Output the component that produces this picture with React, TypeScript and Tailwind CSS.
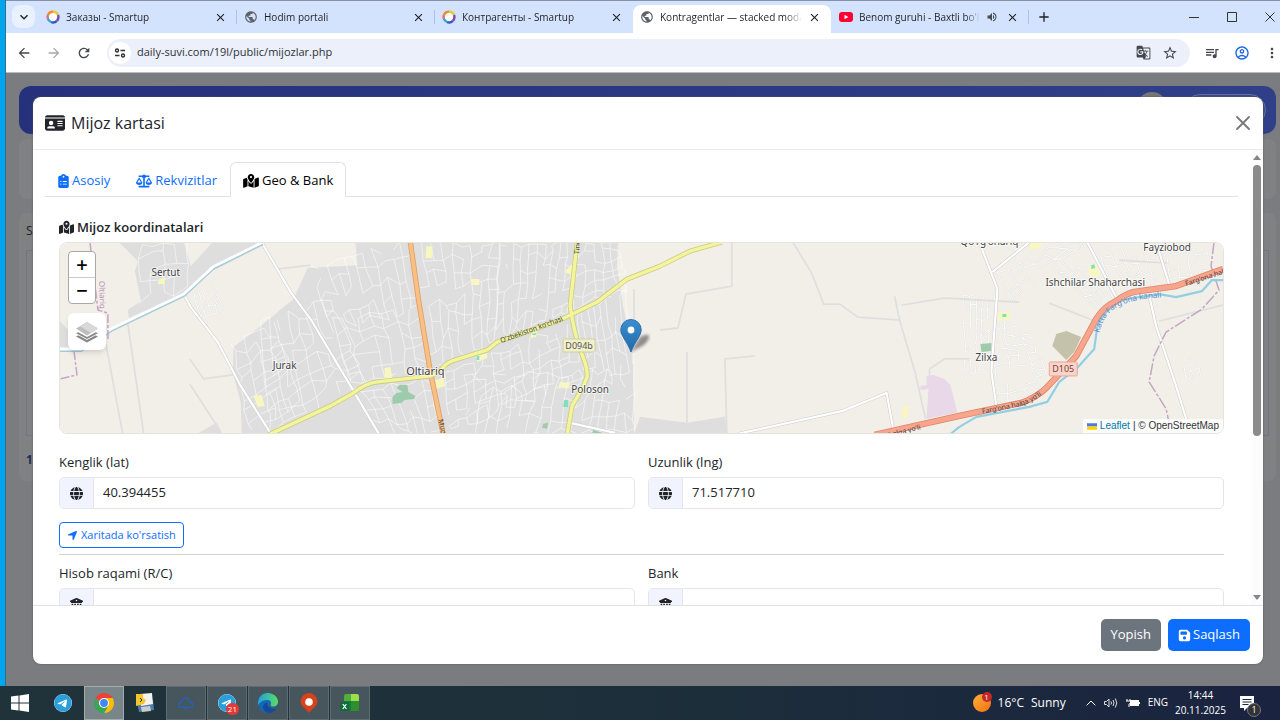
import type { ReactNode } from 'react';
import clsx from 'clsx';
import {
  FaBuildingColumns,
  FaClipboardList,
  FaFloppyDisk,
  FaGlobe,
  FaIdCard,
  FaLocationArrow,
  FaMapLocationDot,
  FaScaleBalanced,
  FaTelegram,
} from 'react-icons/fa6';
import {
  MdAdd,
  MdArrowBack,
  MdArrowForward,
  MdClose,
  MdGTranslate,
  MdKeyboardArrowDown,
  MdMoreVert,
  MdOutlineAccountCircle,
  MdPublic,
  MdQueueMusic,
  MdRefresh,
  MdStarBorder,
  MdVolumeUp,
} from 'react-icons/md';

type Point = [number, number];

/* ---------- browser chrome ---------- */

const SmartupIcon = () => (
  <svg viewBox="0 0 14 14" className="h-[14px] w-[14px] shrink-0" fill="none" strokeWidth="2.4">
    <circle cx="7" cy="7" r="5.4" fill="#fff" />
    <path d="M2 5A5.4 5.4 0 0 1 7 1.6" stroke="#f08a24" />
    <path d="M7 1.6A5.4 5.4 0 0 1 12 5" stroke="#e9c832" />
    <path d="M12 5a5.4 5.4 0 0 1-1.2 5.8" stroke="#7a4bb5" />
    <path d="M10.8 10.8A5.4 5.4 0 0 1 5 12" stroke="#3157c9" />
    <path d="M5 12a5.4 5.4 0 0 1-3.2-3.6" stroke="#35a6c4" />
    <path d="M1.8 8.4A5.4 5.4 0 0 1 2 5" stroke="#f0637a" />
  </svg>
);

const YoutubeIcon = () => (
  <svg viewBox="0 0 14 10" className="h-[10px] w-[14px] shrink-0">
    <rect width="14" height="10" rx="3" fill="#ff0033" />
    <path d="M5.5 2.8v4.4L9.3 5z" fill="#fff" />
  </svg>
);

const GlobeIcon = () => <MdPublic className="h-[14px] w-[14px] shrink-0 text-[#5f6368]" />;

const browserTabs = [
  { title: 'Заказы - Smartup', icon: <SmartupIcon /> },
  { title: 'Hodim portali', icon: <GlobeIcon /> },
  { title: 'Контрагенты - Smartup', icon: <SmartupIcon /> },
  { title: 'Kontragentlar — stacked modal', icon: <GlobeIcon />, active: true },
  { title: "Benom guruhi - Baxtli bo'l |", icon: <YoutubeIcon />, audio: true },
];

const TabStrip = () => (
  <div className="flex h-[33px] shrink-0 border-t border-[#8792a8] bg-[#d3e2fd] pl-[6px] text-[#1f2024]">
    <button
      aria-label="Search tabs"
      className="mt-1 mr-[4px] flex h-[23px] w-[23px] items-center justify-center rounded-lg bg-[#e9f0fe]"
    >
      <MdKeyboardArrowDown className="h-4 w-4" />
    </button>
    {browserTabs.map((tab, i) => (
      <div
        key={tab.title}
        className={clsx(
          'relative flex w-[198px] min-w-0 items-center gap-[6px] pr-[10px] text-[10px]',
          tab.active ? 'mt-1 rounded-t-lg bg-white pb-1 pl-[7px]' : 'pl-[7px]',
          tab.audio && 'pl-[8px]',
        )}
      >
        {tab.icon}
        <span className="min-w-0 flex-1 overflow-hidden whitespace-nowrap [mask-image:linear-gradient(to_right,black_88%,transparent)]">
          {tab.title}
        </span>
        {tab.audio && <MdVolumeUp className="mr-[2px] h-3 w-3 shrink-0 text-[#474a50]" />}
        <button aria-label={`Close ${tab.title}`} className="shrink-0">
          <MdClose className="h-[13px] w-[13px]" />
        </button>
        {i !== 2 && i !== 3 && <i className="absolute right-0 h-[14px] w-px bg-[#a5c3f9]" />}
      </div>
    ))}
    <button aria-label="New tab" className="ml-[7px]">
      <MdAdd className="h-4 w-4" />
    </button>
    <div className="ml-auto flex items-center gap-7 pr-[5px]">
      <button aria-label="Minimize">
        <svg viewBox="0 0 10 10" className="h-[10px] w-[10px]" stroke="#333">
          <path d="M0 5.5h10" />
        </svg>
      </button>
      <button aria-label="Maximize">
        <svg viewBox="0 0 10 10" className="h-[10px] w-[10px]" stroke="#333" fill="none">
          <path d="M.5.5h9v9h-9z" />
        </svg>
      </button>
      <button aria-label="Close window">
        <svg viewBox="0 0 10 10" className="h-[10px] w-[10px]" stroke="#333">
          <path d="M.5.5l9 9M9.5.5l-9 9" />
        </svg>
      </button>
    </div>
  </div>
);

const Toolbar = () => (
  <div className="flex h-[40px] shrink-0 items-center border-b border-[#b9bbbf] bg-white pl-[10px] text-[#44474d]">
    <div className="flex gap-[14px]">
      <button aria-label="Back">
        <MdArrowBack className="h-4 w-4" />
      </button>
      <button aria-label="Forward" className="text-[#a5a7ab]">
        <MdArrowForward className="h-4 w-4" />
      </button>
      <button aria-label="Reload">
        <MdRefresh className="h-4 w-4" />
      </button>
    </div>
    <div className="ml-[15px] flex h-7 flex-1 items-center rounded-full bg-[#ebf0fa] pr-3 pl-[2px]">
      <button
        aria-label="View site information"
        className="flex h-[22px] w-[22px] items-center justify-center rounded-full bg-white"
      >
        <svg viewBox="0 0 12 12" className="h-3 w-3" fill="none" stroke="#333" strokeWidth="1.4">
          <circle cx="3" cy="3.5" r="1.5" />
          <path d="M6.5 3.5H11M1 8.5h4.5" />
          <circle cx="9" cy="8.5" r="1.5" />
        </svg>
      </button>
      <input
        aria-label="Address"
        defaultValue="daily-suvi.com/19l/public/mijozlar.php"
        className="ml-[6px] min-w-0 flex-1 bg-transparent text-[11px] text-[#2d3036] outline-none"
      />
      <button aria-label="Translate" className="mr-[11px]">
        <MdGTranslate className="h-[15px] w-[15px]" />
      </button>
      <button aria-label="Bookmark">
        <MdStarBorder className="h-4 w-4" />
      </button>
    </div>
    <div className="ml-[14px] flex items-center gap-[14px]">
      <button aria-label="Media controls">
        <MdQueueMusic className="h-4 w-4" />
      </button>
      <button aria-label="Profile" className="text-[#1b66e8]">
        <MdOutlineAccountCircle className="h-4 w-4" />
      </button>
      <button aria-label="Menu">
        <MdMoreVert className="h-4 w-4" />
      </button>
    </div>
  </div>
);

/* ---------- map ---------- */

// Repeatable pseudo random number in [0, 1)
const noise = (n: number) => {
  const s = Math.sin(n * 127.1 + 11.7) * 43758.5453;
  return s - Math.floor(s);
};

// Street grid inside a quad given clockwise from its top left corner
const streets = (quad: Point[], cols: number, rows: number, seed: number) => {
  const [a, b, c, d] = quad;
  const at = (i: number, j: number) => {
    const k = seed + i * 31 + j * 7;
    const u = (i + (noise(k) - 0.5) * 0.4) / cols;
    const v = (j + (noise(k + 0.5) - 0.5) * 0.7) / rows;
    const mix = (n: 0 | 1) =>
      (a[n] * (1 - u) + b[n] * u) * (1 - v) + (d[n] * (1 - u) + c[n] * u) * v;
    return `${mix(0).toFixed(1)} ${mix(1).toFixed(1)}`;
  };
  let path = '';
  for (let i = 0; i <= cols; i++) {
    for (let j = 0; j <= rows; j++) {
      const k = seed * 3 + i * 17 + j * 5;
      if (j < rows && noise(k) > 0.2) path += `M${at(i, j)}L${at(i, j + 1)}`;
      if (i < cols && noise(k + 0.3) > 0.3) path += `M${at(i, j)}L${at(i + 1, j)}`;
    }
  }
  return path;
};

const townStreets = [
  streets([[307, 268], [410, 243], [420, 310], [330, 330]], 11, 4, 1),
  streets([[260, 325], [330, 300], [365, 385], [270, 434]], 8, 8, 2),
  streets([[232, 345], [275, 325], [300, 400], [250, 434]], 4, 8, 3),
  streets([[330, 320], [420, 308], [430, 372], [352, 385]], 7, 5, 4),
  streets([[412, 243], [500, 243], [495, 340], [430, 372]], 9, 8, 5),
  streets([[500, 243], [575, 243], [568, 312], [495, 342]], 10, 6, 6),
  streets([[578, 243], [618, 243], [628, 290], [572, 310]], 5, 6, 7),
  streets([[575, 315], [625, 295], [634, 370], [584, 372]], 8, 4, 8),
  streets([[445, 372], [575, 325], [582, 380], [450, 434]], 14, 6, 9),
  streets([[470, 380], [583, 372], [568, 434], [465, 434]], 10, 4, 10),
  streets([[585, 375], [634, 365], [634, 434], [570, 434]], 7, 4, 11),
  streets([[352, 392], [430, 380], [440, 434], [378, 434]], 8, 4, 12),
  streets([[140, 243], [188, 243], [186, 290], [138, 300]], 4, 4, 13),
].join('');

const villageStreets = [
  streets([[964, 296], [996, 292], [992, 372], [966, 376]], 5, 6, 21),
  streets([[998, 320], [1026, 330], [1056, 392], [996, 404]], 4, 11, 22),
  streets([[1000, 275], [1060, 243], [1085, 243], [1012, 300]], 6, 3, 23),
  streets([[1050, 262], [1088, 250], [1115, 300], [1100, 312]], 4, 3, 24),
  streets([[1095, 243], [1155, 243], [1168, 282], [1116, 292]], 5, 4, 25),
  streets([[1165, 243], [1205, 243], [1210, 270], [1172, 280]], 4, 3, 26),
  streets([[1183, 362], [1194, 358], [1202, 376], [1188, 384]], 2, 3, 27),
  streets([[193, 295], [210, 283], [222, 310], [200, 322]], 4, 4, 28),
].join('');

const yellowRoads =
  'M268 436L330 407 353 394Q366 384 377 383L430 377Q440 373 444 367 448 363 455 361L487 351 497 343 560 321 597 303 627 280 660 267 690 252 722 243M577 243L570 307Q574 335 581 353 588 370 587 378L583 388 572 407 567 436';
const redRoad =
  'M875 436L960 417 1022 404Q1038 398 1048 388L1077 357 1097 320Q1104 308 1117 302 1128 293 1140 292L1177 287 1224 270';
const whiteRoads =
  'M183 295L190 308 217 343 240 387 271 436M261 243L290 293 310 320 350 387 379 436M738 435L843 412 887 394 894 432M980 243L998 290 992 373 997 407M993 273L1030 243M1088 243L1118 300M1157 243L1170 285M1150 296L1157 327 1177 387 1192 436M570 424L615 434';
const river =
  'M950 436L960 428 977 418 1030 408 1048 403 1060 383 1077 370 1095 350 1098 328Q1106 308 1127 300L1160 295 1177 298 1203 292 1213 281H1224';

const MapPicture = () => (
  <svg
    viewBox="59 243 1165 192"
    preserveAspectRatio="xMidYMid slice"
    className="h-full w-full"
    fill="none"
    fontFamily="Noto Sans, sans-serif"
    strokeLinejoin="round"
  >
    <path fill="#f2efe9" d="M59 243h1165v192H59z" />
    <g fill="#dedede">
      <path d="M355 243L357 266 307 269 293 300 260 327 233 348 232 374 240 403 241 436H634L633 353 623 307 617 267 618 243z" />
      <path d="M118 243L137 262 134 272 140 302 127 311 128 319 183 295 212 268 262 245V243H212L190 267 183 243z" />
      <path d="M59 322L67 331 70 348 59 351zM198 434L216 424 222 436z" />
      <path d="M634 436L640 418 687 424 725 418 728 436z" />
    </g>
    <path d={townStreets} stroke="#fff" strokeWidth="0.9" opacity="0.6" />
    <path d={villageStreets} stroke="#d6d5d5" strokeWidth="1.8" opacity="0.5" />
    <path d={villageStreets} stroke="#fafafa" strokeWidth="1" />

    <path
      fill="#f8f7bf"
      d="M158 281l6-3v7h-7zM253 397l8-1 3 11-7 1zM426 247h6v12h-7zM471 280h8v6h-8zM564 273l8-8v11zM384 369l6-1 2 11-7 1zM435 381l8-2 2 8-9 3zM560 383l10 1-2 5-10-1zM477 357l10-3v5l-10 4zM531 334l6-3-1 7-6 1zM1030 244l13-1-3 6-9 1zM1089 268l8-3 4 12-10 1zM998 314l14-1-2 7-10 2zM903 408l6-1-1 11-6 2z"
    />
    <path
      fill="#9fcbad"
      d="M392 398l4-4 6-1-6-4 3-3h8l1 7 7 4-1 3-10 1-3 3-9 1zM543 425l5-1-1 6-5-1zM593 431l12 4h-13zM981 345l11-1v8l-10 1z"
    />
    <path
      fill="#7fe0bb"
      d="M564 401h4v7h-5zM477 357h2v4h-3zM1092 266l3-1 1 4-4 1zM1003 315h4v3h-4zM532 335l4-1v2h-4z"
    />
    <path fill="#c5c2ab" d="M1057 335L1067 332 1082 338 1075 353 1067 361 1053 347z" />
    <path fill="#e9d8e8" d="M927 377l7-1 11 4 6 6 7 28-31 6 2-30-8 1v-4l6-1z" />

    <path
      stroke="#e0dfe0"
      strokeWidth="1.8"
      d="M660 331L678 329 686 295 732 287V243M793 243L812 274 824 305H840L858 318 900 321 916 375 926 420M895 297L900 321M902 306L945 299 970 300M687 353V424M727 436L725 360 755 357M930 378V370L945 360H970M105 345L122 436M127 325L143 436M189 360L203 380 232 376M189 385L220 433M1120 261L1168 264M634 290V320M210 335L205 325M276 270L310 266M1050 304L1098 323M1160 322L1224 306M960 300L1020 303"
    />
    <path stroke="#cbcbcb" strokeWidth="3.2" d={whiteRoads} />
    <path stroke="#fff" strokeWidth="2.2" d={whiteRoads} />
    <path stroke="#a5cbd8" strokeWidth="4" d="M59 351H80L110 331 183 296 212 269 262 244" />
    <path stroke="#fff" strokeWidth="2.8" d="M59 350H80L110 330 183 295 212 268 262 243" />

    <path
      stroke="#c9a3c9"
      strokeWidth="1.5"
      strokeDasharray="9 2 3 2"
      d="M89 243L97 311 107 314V342M73 352L76 376 59 380"
    />
    <path
      stroke="#c2a6c2"
      strokeWidth="1.5"
      strokeDasharray="12 2 3 2"
      d="M1215 243L1212 267 1220 291 1203 310 1167 333 1155 357 1150 383 1167 410 1170 424"
    />

    <path stroke="#93cfe2" strokeWidth="2.2" d={river} />
    <path stroke="#e2a069" strokeWidth="5.4" d="M410 243L418 300 430 373 443 436" />
    <path stroke="#f8c183" strokeWidth="3.6" d="M410 243L418 300 430 373 443 436" />
    <path stroke="#c9cb84" strokeWidth="5" d={yellowRoads} />
    <path stroke="#f3f49c" strokeWidth="3.4" d={yellowRoads} />
    <path stroke="#e08468" strokeWidth="6.4" d={redRoad} />
    <path stroke="#f7a58d" strokeWidth="4.8" d={redRoad} />

    <path id="uzbekiston" d="M501 344L562 322 590 308" />
    <path id="halqa" d="M983 415L1022 407Q1036 402 1050 390" />
    <path id="halqa-east" d="M1187 287L1230 273" />
    <path id="halqa-west" d="M884 440L935 427" />
    <path id="kanal" d="M1100 334Q1104 316 1118 308 1134 299 1170 298" />
    <g fill="#444" fontSize="7">
      <text>
        <textPath href="#uzbekiston">O'zbekiston ko'chasi</textPath>
      </text>
      <text>
        <textPath href="#halqa">Farg'ona halqa yo'li</textPath>
      </text>
      <text>
        <textPath href="#halqa-east">Farg'ona hal</textPath>
      </text>
      <text>
        <textPath href="#halqa-west">a halqa yo'li</textPath>
      </text>
      <text transform="translate(579 255) rotate(-86)">Tinc</text>
      <text transform="translate(438 421) rotate(78)">Muqi</text>
      <text fill="#5b8fd0" fontSize="8">
        <textPath href="#kanal">Katta Farg'ona kanali</textPath>
      </text>
      <text fill="#b78fb9" fontSize="8" transform="translate(98 282) rotate(88)">
        Oltiariq
      </text>
    </g>

    <g fill="#444" fontSize="10" textAnchor="middle" stroke="#fff" strokeWidth="2" paintOrder="stroke" strokeOpacity="0.6">
      <text x="165" y="277">Sertut</text>
      <text x="284" y="370">Jurak</text>
      <text x="425" y="376" fontSize="11">Oltiariq</text>
      <text x="590" y="394">Poloson</text>
      <text x="990" y="246">Qo'rg'onariq</text>
      <text x="1168" y="252">Fayziobod</text>
      <text x="1096" y="287">Ishchilar Shaharchasi</text>
      <text x="987" y="362">Zilxa</text>
    </g>

    <rect x="563" y="340" width="32" height="13" rx="1" fill="#f1f0cd" stroke="#cfcf9a" />
    <text x="579" y="350" fill="#555" fontSize="9" textAnchor="middle">
      D094b
    </text>
    <rect x="1050" y="363" width="28" height="14" rx="1" fill="#f8d5cb" stroke="#eaa593" />
    <text x="1064" y="373" fill="#7c3f32" fontSize="9" textAnchor="middle">
      D105
    </text>
  </svg>
);

const MapPin = () => (
  <svg viewBox="0 0 40 34" className="h-[34px] w-[40px]">
    <defs>
      <linearGradient id="pin" x1="0" x2="0" y1="0" y2="1">
        <stop offset="0" stopColor="#3a8fd2" />
        <stop offset="1" stopColor="#2268a8" />
      </linearGradient>
      <filter id="soft">
        <feGaussianBlur stdDeviation="1.5" />
      </filter>
    </defs>
    <path d="M11 33L20 18q8-4 9-1t-5 9z" fill="#000" opacity="0.4" filter="url(#soft)" />
    <path
      d="M11 .5A10.2 10.2 0 0 0 .8 10.7C.8 17 7 22 11 33 15 22 21.2 17 21.2 10.7A10.2 10.2 0 0 0 11 .5z"
      fill="url(#pin)"
      stroke="#2b70ab"
    />
    <circle cx="11" cy="11" r="3.4" fill="#fff" />
  </svg>
);

const GeoMap = () => (
  <div className="relative h-[192px] overflow-hidden rounded-lg border border-[#e6e4de]">
    <MapPicture />
    <div className="absolute top-[76px] left-1/2 -ml-[22px]">
      <MapPin />
    </div>
    <div className="absolute top-[8px] left-[8px] flex w-[28px] flex-col rounded border border-[#a9a8a5] bg-white text-xl text-black">
      <button className="h-[26px] border-b border-[#ccc] leading-6 font-semibold">+</button>
      <button className="h-[25px] leading-5 font-semibold">−</button>
    </div>
    <button
      aria-label="Layers"
      className="absolute top-[70px] left-[8px] flex h-[37px] w-[38px] items-center justify-center rounded-md bg-white shadow-md"
    >
      <svg viewBox="0 0 24 24" className="h-6 w-6">
        <path d="M12 11L1 16.5 12 22.5 23 16.5z" fill="#888" />
        <path d="M12 9L1 14 12 20 23 14z" fill="#fff" />
        <path d="M12 8L1 13.2 12 19 23 13.2z" fill="#8a8a8a" />
        <path d="M12 6L1 11 12 17 23 11z" fill="#fff" />
        <path d="M12 2L1 8.5 12 15.5 23 8.5z" fill="#bdbdbd" />
        <path d="M12 2L5 6.2 16 13 23 8.5z" fill="#d8d8d8" />
      </svg>
    </button>
    <div className="absolute right-0 bottom-0 flex items-center gap-[3px] bg-white/80 px-1 font-['Liberation_Sans',sans-serif] text-[10px] leading-[14px] text-[#333]">
      <svg viewBox="0 0 12 8" className="h-[7px] w-[10px]">
        <path fill="#4c7be1" d="M0 0h12v4H0z" />
        <path fill="#ffd500" d="M0 4h12v4H0z" />
      </svg>
      <a href="https://leafletjs.com" className="text-[#0078a8]">
        Leaflet
      </a>
      <span>| © OpenStreetMap</span>
    </div>
  </div>
);

/* ---------- client card dialog ---------- */

const cardTabs = [
  { label: 'Asosiy', Icon: FaClipboardList },
  { label: 'Rekvizitlar', Icon: FaScaleBalanced },
  { label: 'Geo & Bank', Icon: FaMapLocationDot, active: true },
];

interface FieldProps {
  id: string;
  label: string;
  icon: ReactNode;
  value?: string;
}

const Field = ({ id, label, icon, value = '' }: FieldProps) => (
  <div>
    <label htmlFor={id} className="mb-[5px] block leading-5">
      {label}
    </label>
    <div className="flex h-8 overflow-hidden rounded-[5px] border border-[#e4e6ea]">
      <span className="flex w-[34px] items-center justify-center border-r border-[#e4e6ea] bg-[#f1f4fe]">
        {icon}
      </span>
      <input id={id} defaultValue={value} className="min-w-0 flex-1 px-[9px] outline-none" />
    </div>
  </div>
);

const ClientDialog = () => (
  <div
    role="dialog"
    aria-labelledby="dialog-title"
    className="flex min-h-0 flex-1 flex-col overflow-hidden rounded-lg bg-white text-[13px] text-[#212529] shadow-[0_0_2px_#555]"
  >
    <header className="flex h-[53px] shrink-0 items-center border-b border-[#e9ebee] px-3">
      <FaIdCard className="mr-[6px] h-5 w-5" />
      <h5 id="dialog-title" className="text-base font-medium">
        Mijoz kartasi
      </h5>
      <button aria-label="Close" className="ml-auto">
        <svg viewBox="0 0 16 16" className="h-4 w-4" stroke="#777" strokeWidth="1.8" strokeLinecap="round">
          <path d="M2 2l12 12M14 2L2 14" />
        </svg>
      </button>
    </header>

    <div className="flex min-h-0 flex-1">
      <div className="min-w-0 flex-1 overflow-y-auto pt-3 pr-[13px] pl-3 [scrollbar-width:none]">
        <div role="tablist" className="flex border-b border-[#dee2e6]">
          {cardTabs.map(({ label, Icon, active }) => (
            <button
              key={label}
              role="tab"
              aria-selected={!!active}
              className={clsx(
                '-mb-px flex h-[35px] items-center gap-[3px] rounded-t-md border px-3 pt-[2px]',
                active ? 'border-[#dee2e6] border-b-white bg-white text-black' : 'border-transparent text-[#0d6efd]',
              )}
            >
              <Icon className={clsx('h-[14px]', label === 'Asosiy' ? 'w-[11px]' : 'w-4')} />
              {label}
            </button>
          ))}
        </div>

        <div className="px-[14px] pt-5">
          <h6 className="mb-[5px] flex items-center gap-[3px] leading-5 font-semibold">
            <FaMapLocationDot className="h-[15px] w-[15px]" />
            Mijoz koordinatalari
          </h6>
          <GeoMap />
          <div className="mt-[18px] grid grid-cols-2 gap-x-[13px]">
            <Field id="lat" label="Kenglik (lat)" icon={<FaGlobe />} value="40.394455" />
            <Field id="lng" label="Uzunlik (lng)" icon={<FaGlobe />} value="71.517710" />
          </div>
          <button className="mt-[13px] flex h-[26px] items-center gap-[3px] rounded border border-[#0d6efd] px-[7px] text-[11px] text-[#0d6efd]">
            <FaLocationArrow className="h-[11px] w-[11px]" />
            Xaritada ko'rsatish
          </button>
          <hr className="my-[6px] border-[#d0d2d4]" />
          <div className="grid grid-cols-2 gap-x-[13px] pt-[2px] pb-3">
            <Field id="account" label="Hisob raqami (R/C)" icon={<FaBuildingColumns />} />
            <Field id="bank" label="Bank" icon={<FaBuildingColumns />} />
          </div>
        </div>
      </div>
      <div className="flex w-3 shrink-0 flex-col items-center bg-[#fcfcfc] pt-[5px] pb-[5px]">
        <i className="border-x-4 border-b-5 border-x-transparent border-b-[#858585]" />
        <i className="mt-[5px] h-[61%] w-2 rounded-full bg-[#8b8b8b]" />
        <i className="mt-auto border-x-4 border-t-5 border-x-transparent border-t-[#858585]" />
      </div>
    </div>

    <footer className="flex h-[59px] shrink-0 items-center justify-end gap-[7px] border-t border-[#dee2e6] px-[13px] text-white">
      <button className="h-8 rounded-[5px] bg-[#6c757d] px-[10px]">Yopish</button>
      <button className="flex h-8 items-center gap-[2px] rounded-[5px] bg-[#0d6efd] px-[10px]">
        <FaFloppyDisk />
        Saqlash
      </button>
    </footer>
  </div>
);

const Page = () => (
  <main className="relative flex min-h-0 flex-1 flex-col bg-[#7b7c80]">
    <div className="flex flex-col pt-[13px] pr-1 pl-[13px] text-[#222]">
      <nav className="flex h-[48px] justify-end gap-4 rounded-xl bg-linear-to-r from-[#25327b] to-[#2f3f88] px-[10px]">
        <i className="mt-[6px] h-8 w-8 rounded-full bg-[#77777a]" />
        <i className="mt-2 h-8 w-[82px] rounded-full border border-[#66709d] bg-[#3a4789]" />
      </nav>
      <div className="mt-[5px] h-[60px] rounded-lg bg-[#808183]" />
      <div className="mt-[14px] h-[268px] rounded-lg bg-[#808183] px-[7px] pt-[10px]">
        <span className="block text-xs">S</span>
        <div className="mt-[11px] h-[186px] border border-[#73748a]" />
        <span className="mt-4 block text-xs font-bold text-[#232b52]">1</span>
      </div>
    </div>
    <div className="absolute inset-0 flex pt-6 pr-[17px] pb-[22px] pl-[27px]">
      <ClientDialog />
    </div>
  </main>
);

/* ---------- taskbar ---------- */

const TelegramIcon = () => (
  <span className="block rounded-full bg-white">
    <FaTelegram className="h-[18px] w-[18px] text-[#2a9fdb]" />
  </span>
);

const apps: { name: string; state?: 'open' | 'front'; icon: ReactNode }[] = [
  { name: 'Telegram', icon: <TelegramIcon /> },
  {
    name: 'Chrome',
    state: 'front',
    icon: (
      <svg viewBox="0 0 20 20" className="h-5 w-5">
        <path d="M10 10L1.34 5A10 10 0 0 1 18.66 5z" fill="#ea4335" />
        <path d="M10 5h8.66A10 10 0 0 1 10 20l4.3-7.500z" fill="#fbbc04" />
        <path d="M1.34 5L5.7 12.500 14.300 12.500 10 20A10 10 0 0 1 1.34 5z" fill="#34a853" />
        <circle cx="10" cy="10" r="5" fill="#fff" />
        <circle cx="10" cy="10" r="3.9" fill="#4285f4" />
      </svg>
    ),
  },
  {
    name: 'Save manager',
    icon: (
      <svg viewBox="0 0 20 20" className="h-5 w-5">
        <path d="M2 9l16-2 1 10-15 2z" fill="#4f7fae" />
        <path d="M5 1l12-1 1 11-12 2z" fill="#f2f2ee" />
        <path d="M6 14l9-1 1 5-9 1z" fill="#ccc" />
        <path d="M1 1h7v4l3 2-2 4-8 2z" fill="#f5c52d" />
        <path d="M5 5l2 2-2 2" stroke="#333" fill="none" />
      </svg>
    ),
  },
  {
    name: 'Cloud',
    state: 'open',
    icon: (
      <svg viewBox="0 0 18 16" className="h-4 w-[18px]" fill="none" stroke="#2461b8" strokeWidth="1.4">
        <path d="M5 12.5C0 12.5 1 7 4.5 7.2 5 2 12 2 12.7 7 17 6.5 17 12.5 13 12.5z" />
        <path d="M7 14h4" strokeDasharray="1 1" />
      </svg>
    ),
  },
  {
    name: 'Telegram chat',
    state: 'open',
    icon: (
      <>
        <TelegramIcon />
        <span className="absolute right-[7px] bottom-[4px] rounded-full bg-[#e53935] px-[2px] text-[8px] leading-3 text-white">
          21
        </span>
      </>
    ),
  },
  {
    name: 'Edge',
    state: 'open',
    icon: (
      <svg viewBox="0 0 20 20" className="h-5 w-5">
        <defs>
          <linearGradient id="edge" x1="0" x2="1" y1="0.3" y2="0.4">
            <stop offset="0" stopColor="#1f9fe0" />
            <stop offset="1" stopColor="#5bdc62" />
          </linearGradient>
        </defs>
        <circle cx="10" cy="10" r="10" fill="#1467b8" />
        <path d="M0 9C1 3 5 0 10 0s10 4 10 8.5S16 14 14 13.5s-1-2-1-3.5-1-3-4-3-6 1-9 5z" fill="url(#edge)" />
        <path d="M20 13c-3 3-11 2-11-3 0-1-4 0-4 4 0 3 3 5.5 6 6 4 0 8-3.5 9-7z" fill="#0f4c9c" />
        <path d="M20 12.5c-3 2.5-9 2-11-2 .5 4 5 6 9.5 5z" fill="#4b5a61" />
      </svg>
    ),
  },
  {
    name: 'Maps',
    state: 'open',
    icon: (
      <svg viewBox="0 0 18 20" className="h-5 w-[18px]">
        <path d="M9 0a8.5 8.5 0 0 0-8.5 8.5C.5 13 5 15 9 20c4-5 8.5-7 8.5-11.5A8.5 8.5 0 0 0 9 0z" fill="#d5421b" />
        <circle cx="9" cy="9" r="3.8" fill="#fff" />
      </svg>
    ),
  },
  {
    name: 'Excel',
    state: 'open',
    icon: (
      <svg viewBox="0 0 20 20" className="h-5 w-5">
        <path d="M4 3q0-2 2-2h5v9H4z" fill="#4fae3c" />
        <path d="M11 1h6q2 0 2 2v6h-8z" fill="#9be04b" />
        <path d="M4 8h7v10H4z" fill="#157a3b" />
        <path d="M11 8h8v9q0 1-2 1h-6z" fill="#2f8f2f" />
        <rect y="9" width="9" height="9" rx="2" fill="#0f6b3b" />
        <path d="M2.8 11l3.6 5M6.4 11l-3.6 5" stroke="#fff" strokeWidth="1.2" />
      </svg>
    ),
  },
];

const Taskbar = () => (
  <footer className="flex h-[34px] shrink-0 items-center bg-linear-to-r from-[#20333a] via-[#1d2f3a] to-[#1a2340] text-xs text-white">
    <button aria-label="Start" className="flex w-[42px] justify-center pr-[3px]">
      <svg viewBox="0 0 18 18" className="h-[18px] w-[18px]" fill="#fff">
        <path d="M0 2.5L7.5 1.5V8.5H0zM8.5 1.4L18 0V8.5H8.5zM0 9.5H7.5V16.5L0 15.5zM8.5 9.5H18V18L8.5 16.6z" />
      </svg>
    </button>
    <div className="flex h-full gap-px pl-px">
      {apps.map(({ name, state, icon }) => (
        <button
          key={name}
          aria-label={name}
          className={clsx(
            'relative flex w-10 items-center justify-center',
            state === 'front' && 'border border-[#a3abad] bg-[#78868a]',
            state === 'open' && 'border border-[#5d6b72] bg-[#47555d]',
          )}
        >
          {icon}
        </button>
      ))}
    </div>
    <div className="ml-auto flex items-center">
      <div className="flex items-center">
        <span className="relative mr-[7px] h-[18px] w-[18px] rounded-full bg-linear-to-br from-[#fbb034] to-[#f26f13]">
          <b className="absolute -top-[2px] -right-[1px] h-[10px] w-[10px] rounded-full bg-[#c62828] text-center text-[8px] leading-[10px] font-normal">
            1
          </b>
        </span>
        <span className="mr-[7px]">16°C</span>
        <span>Sunny</span>
      </div>
      <div className="ml-5 flex items-center gap-2">
        <svg viewBox="0 0 10 6" className="h-[6px] w-[10px]" fill="none" stroke="#fff">
          <path d="M.7 5.3L5 1l4.3 4.3" />
        </svg>
        <svg viewBox="0 0 14 12" className="h-3 w-[14px]" fill="none" stroke="#ddd">
          <path d="M.5 4.5h2L5 2v8L2.5 7.5h-2zM7 4.5q1 1.5 0 3M9 3q2 3 0 6M11.3 1.5q3 4.5 0 9" />
        </svg>
        <svg viewBox="0 0 14 10" className="h-[10px] w-[14px]" fill="#fff">
          <path d="M4 2h9v6H4zM13 4h1v2h-1z" />
          <path d="M1 1v2M4 1v2M0 3h5v2L3 6v3" fill="none" stroke="#fff" />
        </svg>
        <span className="text-[10px]">ENG</span>
      </div>
      <div className="ml-[7px] text-center text-[10px] leading-[15px]">
        <div>14:44</div>
        <div>20.11.2025</div>
      </div>
      <button aria-label="Notifications" className="relative mr-[26px] ml-[14px]">
        <svg viewBox="0 0 14 15" className="h-[15px] w-[14px]">
          <path d="M0 0h14v12H7l-3 3v-3H0z" fill="#fff" />
          <path d="M2.5 3.5h9M2.5 6h9M2.5 8.5h6" stroke="#1a2440" />
        </svg>
        <span className="absolute -right-[7px] -bottom-[6px] h-[14px] w-[14px] rounded-full border border-[#777] bg-[#333] text-[9px] leading-3">
          1
        </span>
      </button>
    </div>
  </footer>
);

export default function App() {
  return (
    <div className="flex h-screen flex-col overflow-hidden font-['Open_Sans',sans-serif]">
      <div className="flex min-h-0 flex-1">
        <div className="w-[6px] shrink-0 border-r border-[#2f6f94] bg-[#00a5ec]" />
        <div className="flex min-w-0 flex-1 flex-col">
          <TabStrip />
          <Toolbar />
          <Page />
        </div>
      </div>
      <Taskbar />
    </div>
  );
}
